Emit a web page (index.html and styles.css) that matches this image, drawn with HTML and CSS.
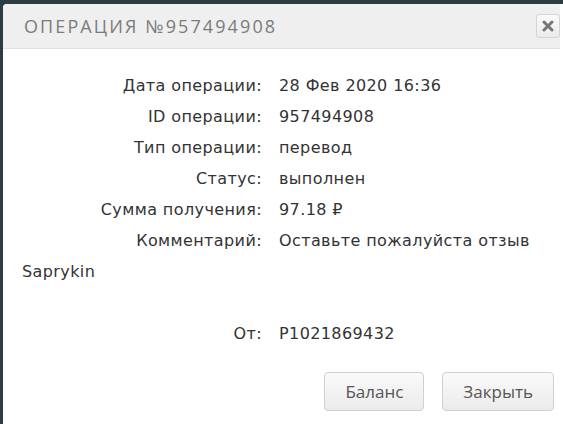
FILE: index.html
```html
<!DOCTYPE html>
<html lang="ru">
<head>
  <meta charset="UTF-8" />
  <title>Операция №957494908</title>
  <link rel="stylesheet" href="styles.css">
</head>
<body>
  <div class="modal">
    <div class="modal-header">
      <h3 class="modal-title">Операция №957494908</h3>
      <button class="close-btn" type="button" aria-label="Закрыть">
        <svg width="12" height="12" viewBox="0 0 12 12"><path d="M2 2L10 10M10 2L2 10" stroke="#777" stroke-width="3" stroke-linecap="round"/></svg>
      </button>
    </div>
    <div class="modal-body">
      <div class="row"><span class="label">Дата операции:</span><span class="value">28 Фев 2020 16:36</span></div>
      <div class="row"><span class="label">ID операции:</span><span class="value">957494908</span></div>
      <div class="row"><span class="label">Тип операции:</span><span class="value">перевод</span></div>
      <div class="row"><span class="label">Статус:</span><span class="value">выполнен</span></div>
      <div class="row"><span class="label">Сумма получения:</span><span class="value">97.18 &#8381;</span></div>
      <div class="row"><span class="label">Комментарий:</span><span class="value">Оставьте пожалуйста отзыв Saprykin</span></div>
      <div class="row empty"></div>
      <div class="row"><span class="label">От:</span><span class="value">P1021869432</span></div>
    </div>
    <div class="modal-footer">
      <button class="btn" type="button">Баланс</button>
      <button class="btn" type="button">Закрыть</button>
    </div>
  </div>
</body>
</html>
```

FILE: styles.css
```css
html, body { margin: 0; padding: 0; height: 100%; overflow: hidden; }
body { background: #2d3b43; padding: 4px 0 0 3px; box-sizing: border-box; }
.modal { background: #fff; border-radius: 4px 0 0 0; width: 600px; height: 100%; overflow: hidden; }
.modal-header { display: flex; align-items: center; justify-content: space-between; height: 45px; padding: 0 0 0 21px; width: 557px; box-sizing: border-box; background: #efefef; border-bottom: 1px solid #e2e2e2; }
.modal-title { margin: 0; font-family: "Open Sans", sans-serif; font-weight: 400; font-size: 18px; letter-spacing: 2.1px; text-transform: uppercase; color: #7b7b7b; }
.close-btn { display: flex; align-items: center; justify-content: center; width: 24px; height: 24px; padding: 0; border: 1px solid #d4d4d4; border-radius: 3px; background: linear-gradient(#fafafa, #ececec); }
.modal-body { padding: 21px 0 0 19px; font-family: "DejaVu Sans", sans-serif; font-size: 16px; letter-spacing: 0.4px; line-height: 31px; color: #333; width: 530px; }
.row { min-height: 31px; }
.label { display: inline-block; width: 240px; text-align: right; margin-right: 17px; }
.modal-footer { display: flex; justify-content: flex-end; gap: 18px; padding: 23px 0 0 0; width: 551px; }
.btn { height: 39px; padding: 0 20px; border: 1px solid #d0d0d0; border-radius: 4px; background: linear-gradient(#fafafa, #ebebeb); font-family: "Open Sans", sans-serif; font-size: 17px; color: #555; }
```
